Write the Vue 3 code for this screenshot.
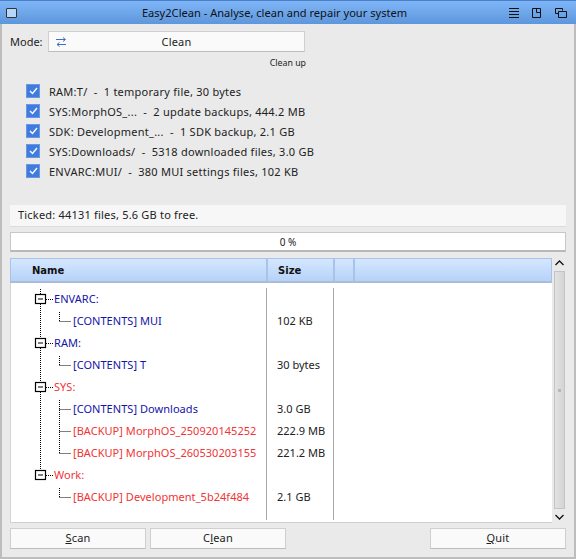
<template>
  <div class="window">
    <div class="titlebar">
      <span class="close-box"></span>
      <span class="title">Easy2Clean - Analyse, clean and repair your system</span>
      <svg class="tb-icon first" width="10" height="10" viewBox="0 0 10 10">
        <path d="M0 .5h10M0 3.500h10M0 6.500h10M0 9.500h10" stroke="#111" fill="none" />
      </svg>
      <svg class="tb-icon" width="10" height="10" viewBox="0 0 10 10">
        <path d="M.5.500h8v9h-8zM4.500.500v4h4" stroke="#111" fill="none" />
      </svg>
      <svg class="tb-icon" width="12" height="10" viewBox="0 0 12 10">
        <path d="M.5.500h7v2M.5.500v5h3M3.500 3.500h8v6h-8z" stroke="#111" fill="none" />
      </svg>
    </div>

    <div class="body">
      <div class="mode-row">
        <span class="mode-label">Mode:</span>
        <div class="cycle">
          <svg width="11" height="10" viewBox="0 0 11 10">
            <path d="M0 2.500h9M7 .5 9.500 2.500 7 4.500M10 7.500H1M3.500 5.500 1 7.500l2.500 2" stroke="#3f6fc0" fill="none" />
          </svg>
          <span>Clean</span>
        </div>
      </div>
      <div class="hint">Clean up</div>

      <div class="checks">
        <div v-for="c in checks" :key="c" class="check-row">
          <span class="check">
            <svg width="9" height="8" viewBox="0 0 9 8"><path d="M1 4l2.500 2.500L8 1" stroke="#fff" stroke-width="1.400" fill="none" /></svg>
          </span>
          <span>{{ c }}</span>
        </div>
      </div>

      <div class="info">Ticked: 44131 files, 5.6 GB to free.</div>
      <div class="progress">0 %</div>

      <div class="list-area">
        <div class="list">
          <div class="list-head">
            <div class="h-name">Name</div>
            <div class="h-size">Size</div>
            <div class="h-gap"></div>
            <div class="h-rest"></div>
          </div>
          <div class="list-body">
            <div class="col-name">
              <div v-for="(r, i) in rows" :key="i" class="tree-row" :class="r.color">
                <svg class="conn" width="62" height="22" viewBox="0 0 62 22">
                  <template v-if="r.root">
                    <path :d="i === 0 ? 'M29.500 1V6' : 'M29.500 0V6'" class="dots" />
                    <path v-if="i < lastRoot" d="M29.500 16V22" class="dots" />
                    <rect x="24.500" y="6.500" width="10" height="9" fill="#fff" stroke="#000" stroke-width="1.200" />
                    <path d="M27 11h5" stroke="#000" fill="none" />
                    <path d="M35 11.500h7" class="dots" />
                  </template>
                  <template v-else>
                    <path v-if="i < lastRoot" d="M29.500 0V22" class="dots" />
                    <path :d="connector(r, i)" class="dots" />
                  </template>
                </svg>
                <span class="tree-label" :class="{ 'root-label': r.root }">{{ r.name }}</span>
              </div>
            </div>
            <div class="col-size">
              <div v-for="(r, i) in rows" :key="i" class="size-cell">{{ r.size }}</div>
            </div>
          </div>
        </div>
        <div class="scrollbar">
          <svg width="11" height="8" viewBox="0 0 11 8"><path d="M1.500 6 5.500 2l4 4" stroke="#111" stroke-width="1.300" fill="none" /></svg>
          <div class="thumb"><span class="grip"></span></div>
          <svg class="down" width="11" height="8" viewBox="0 0 11 8"><path d="M1.500 2l4 4 4-4" stroke="#111" stroke-width="1.300" fill="none" /></svg>
        </div>
      </div>

      <div class="buttons">
        <div class="btn"><span><u>S</u>can</span></div>
        <div class="btn"><span>C<u>l</u>ean</span></div>
        <div class="spacer"></div>
        <div class="btn"><span><u>Q</u>uit</span></div>
      </div>
    </div>
  </div>
</template>

<script setup>
const checks = [
  'RAM:T/  -  1 temporary file, 30 bytes',
  'SYS:MorphOS_...  -  2 update backups, 444.2 MB',
  'SDK: Development_...  -  1 SDK backup, 2.1 GB',
  'SYS:Downloads/  -  5318 downloaded files, 3.0 GB',
  'ENVARC:MUI/  -  380 MUI settings files, 102 KB'
]

const rows = [
  { name: 'ENVARC:', root: true, color: 'blue', size: '' },
  { name: '[CONTENTS] MUI', color: 'blue', size: '102 KB' },
  { name: 'RAM:', root: true, color: 'blue', size: '' },
  { name: '[CONTENTS] T', color: 'blue', size: '30 bytes' },
  { name: 'SYS:', root: true, color: 'red', size: '' },
  { name: '[CONTENTS] Downloads', color: 'blue', size: '3.0 GB', more: true },
  { name: '[BACKUP] MorphOS_250920145252', color: 'red', size: '222.9 MB', more: true },
  { name: '[BACKUP] MorphOS_260530203155', color: 'red', size: '221.2 MB' },
  { name: 'Work:', root: true, color: 'red', size: '' },
  { name: '[BACKUP] Development_5b24f484', color: 'red', size: '2.1 GB' }
]

const lastRoot = 8

// first child starts just under the parent's box, the others carry on from the row above
function connector(r, i) {
  const top = rows[i - 1].root ? 2 : 0
  const bottom = r.more ? 22 : 11.5
  return `M48.500 ${top}V${bottom}M48.500 11.500H60`
}
</script>

<style>
html, body {
  margin: 0;
  background: #eaeaea;
}
</style>

<style scoped>
.window {
  width: 576px;
  height: 559px;
  box-sizing: border-box;
  display: flex;
  flex-direction: column;
  background: #eaeaea;
  border-left: 2px solid #bdbdbd;
  border-right: 2px solid #bdbdbd;
  border-bottom: 2px solid #bdbdbd;
  font-family: "Noto Sans", sans-serif;
  font-size: 11px;
  color: #222;
  white-space: pre;
}

.titlebar {
  margin: 0 -2px;
  height: 24px;
  flex: none;
  display: flex;
  align-items: center;
  padding: 0 9px 0 6px;
  background: linear-gradient(#7fb6f8, #5e96dc);
  border-top: 1px solid #4a7fc8;
  box-sizing: border-box;
  color: #111;
}

.close-box {
  width: 9px;
  height: 8px;
  border: 1px solid #333;
  border-radius: 1px;
  background: #b5d6fb;
}

.title {
  flex: 1;
  text-align: center;
  font-size: 11.100px;
  padding-left: 23px;
}

.tb-icon {
  margin-left: 13px;
}

.tb-icon.first {
  margin-left: 0;
}

.body {
  flex: 1;
  display: flex;
  flex-direction: column;
  padding: 7px 8px 8px;
}

.mode-row {
  display: flex;
  align-items: center;
  height: 21px;
}

.mode-label {
  width: 38px;
}

.cycle {
  width: 257px;
  height: 21px;
  box-sizing: border-box;
  display: flex;
  align-items: center;
  padding-left: 7px;
  background: #fafafa;
  border: 1px solid #cfcfcf;
  border-bottom-color: #bdbdbd;
}

.cycle span {
  flex: 1;
  text-align: center;
  padding-right: 18px;
  letter-spacing: .2px;
}

.hint {
  width: 296px;
  text-align: right;
  font-size: 8.800px;
  margin-top: 4px;
  height: 14px;
  line-height: 14px;
}

.checks {
  margin-top: 11px;
  padding-left: 16px;
  height: 124px;
  letter-spacing: .25px;
}

.check-row {
  height: 20px;
  display: flex;
  align-items: center;
  gap: 9px;
}

.check {
  width: 12px;
  height: 12px;
  display: flex;
  align-items: center;
  justify-content: center;
  background: #3f7be0;
  border: 1px solid #6b97de;
}

.info {
  height: 22px;
  line-height: 20px;
  box-sizing: border-box;
  padding-left: 8px;
  background: #f7f7f7;
  border-bottom: 1px solid #dcdcdc;
  letter-spacing: .2px;
}

.progress {
  height: 20px;
  line-height: 18px;
  margin-top: 5px;
  box-sizing: border-box;
  text-align: center;
  font-size: 10px;
  background: #fff;
  border: 1px solid #c8c8c8;
  border-bottom: 2px solid #b8b8b8;
}

.list-area {
  flex: 1;
  display: flex;
  margin-top: 6px;
  min-height: 0;
}

.list {
  flex: 1;
  display: flex;
  flex-direction: column;
  background: #fff;
  border-bottom: 1px solid #cfcfcf;
  border-left: 1px solid #d4d4d4;
}

.list-head {
  height: 25px;
  flex: none;
  display: flex;
  box-sizing: border-box;
  margin-left: -1px;
  font-family: "DejaVu Sans", sans-serif;
  font-size: 10px;
  font-weight: 700;
  color: #111;
  background: linear-gradient(#d5e7ff, #b6d2f8);
  border: 1px solid #a9c3e8;
  border-bottom: 2px solid #a9bcd8;
}

.h-name {
  width: 257px;
  padding-left: 21px;
  line-height: 24px;
  box-sizing: border-box;
  border-right: 2px solid #a9c3e8;
}

.h-size {
  width: 67px;
  padding-left: 10px;
  line-height: 24px;
  box-sizing: border-box;
  border-right: 2px solid #a9c3e8;
}

.h-gap {
  width: 20px;
  box-sizing: border-box;
  border-right: 2px solid #a9c3e8;
}

.h-rest {
  flex: 1;
}

.list-body {
  flex: 1;
  display: flex;
  padding-top: 5px;
}

.col-name {
  width: 256px;
  height: 232px;
  box-sizing: border-box;
  border-right: 1px solid #a8a8a8;
}

.col-size {
  width: 67px;
  height: 232px;
  box-sizing: border-box;
  padding-left: 10px;
  border-right: 1px solid #a8a8a8;
}

.tree-row {
  height: 22px;
  display: flex;
  align-items: center;
  letter-spacing: .04px;
}

.tree-row.blue {
  color: #1414a8;
}

.tree-row.red {
  color: #f03434;
}

.tree-label {
  margin-bottom: 2px;
}

.conn {
  flex: none;
}

.dots {
  fill: none;
  stroke: #000;
  stroke-dasharray: 1 1;
}

.root-label {
  margin-left: -19px;
}

.size-cell {
  height: 22px;
  line-height: 22px;
}

.scrollbar {
  width: 13px;
  margin-left: 1px;
  display: flex;
  flex-direction: column;
  align-items: center;
}

.scrollbar svg {
  flex: none;
  margin: 1px 0 4px;
}

.scrollbar svg.down {
  margin: 4px 0 2px;
}

.thumb {
  flex: 1;
  width: 11px;
  box-sizing: border-box;
  display: flex;
  align-items: center;
  justify-content: center;
  background: linear-gradient(90deg, #e2e2e2, #d4d4d4);
  border: 1px solid #c4c4c4;
}

.grip {
  width: 3px;
  height: 3px;
  background: #b8b8b8;
}

.buttons {
  display: flex;
  gap: 4px;
  margin-top: 5px;
}

.btn {
  width: 136px;
  height: 21px;
  box-sizing: border-box;
  display: flex;
  align-items: center;
  justify-content: center;
  padding-bottom: 2px;
  background: #fafafa;
  border: 1px solid #cfcfcf;
  border-bottom-color: #bdbdbd;
  letter-spacing: .2px;
}

.spacer {
  flex: 1;
}
</style>
